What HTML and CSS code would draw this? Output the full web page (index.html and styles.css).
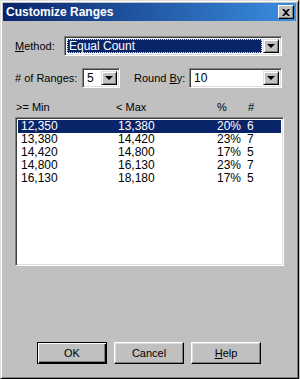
FILE: index.html
```
<!DOCTYPE html>
<html>
  <head>
    <title>Customize Ranges</title>
    <link rel="stylesheet" href="styles.css">
  </head>
  <body>
    <div class="window">
      <!-- Title bar -->
      <div class="titlebar">
        <span class="title">Customize Ranges</span>
        <span class="close-btn">
          <svg width="8" height="7" viewBox="0 0 8 7">
            <path d="M0 0h2l2 2 2-2h2L5 3.5 8 7H6L4 5 2 7H0l3-3.5z" fill="#000"/>
          </svg>
        </span>
      </div>

      <div class="content">
        <!-- Method -->
        <div class="row row-method">
          <label class="label label-method"><u>M</u>ethod:</label>
          <div class="combo combo-method">
            <div class="combo-value selected">Equal Count</div>
            <span class="combo-btn"><span class="arrow"></span></span>
          </div>
        </div>

        <!-- Ranges / Round by -->
        <div class="row row-ranges">
          <label class="label label-ranges"># of Ranges:</label>
          <div class="combo combo-small">
            <div class="combo-value">5</div>
            <span class="combo-btn"><span class="arrow"></span></span>
          </div>
          <label class="label label-round">Round <u>B</u>y:</label>
          <div class="combo combo-round">
            <div class="combo-value">10</div>
            <span class="combo-btn"><span class="arrow"></span></span>
          </div>
        </div>

        <!-- Column headers -->
        <div class="list-head">
          <span>&gt;= Min</span>
          <span>&lt; Max</span>
          <span>%</span>
          <span>#</span>
        </div>

        <!-- Range list -->
        <div class="list">
          <div class="list-row active"><span>12,350</span><span>13,380</span><span>20%</span><span>6</span></div>
          <div class="list-row"><span>13,380</span><span>14,420</span><span>23%</span><span>7</span></div>
          <div class="list-row"><span>14,420</span><span>14,800</span><span>17%</span><span>5</span></div>
          <div class="list-row"><span>14,800</span><span>16,130</span><span>23%</span><span>7</span></div>
          <div class="list-row"><span>16,130</span><span>18,180</span><span>17%</span><span>5</span></div>
        </div>

        <!-- Buttons -->
        <div class="buttons">
          <button class="btn default">OK</button>
          <button class="btn">Cancel</button>
          <button class="btn"><u>H</u>elp</button>
        </div>
      </div>
    </div>
  </body>
</html>
```

FILE: styles.css
```
/* Classic dialog look */
body {
  margin: 0;
  background-color: #c0c0c0;
  font-family: "Liberation Sans", Arial, sans-serif;
  font-size: 11px;
  color: #000;
}

.window {
  width: 299px;
  height: 379px;
  box-sizing: border-box;
  background-color: #c0c0c0;
  border: 1px solid;
  border-color: #dfdfdf #000 #000 #dfdfdf;
  box-shadow: inset 1px 1px #fff, inset -1px -1px #808080;
  padding: 2px;
  display: flex;
  flex-direction: column;
}

.titlebar {
  height: 18px;
  background: linear-gradient(to right, #0a246a, #3a8ee0);
  color: #fff;
  font-weight: bold;
  font-size: 12px;
  display: flex;
  align-items: center;
  justify-content: space-between;
  padding: 0 2px 0 3px;
}

.close-btn {
  width: 14px;
  height: 12px;
  background-color: #c0c0c0;
  border: 1px solid;
  border-color: #fff #000 #000 #fff;
  box-shadow: inset -1px -1px #808080;
  display: flex;
  align-items: center;
  justify-content: center;
}

.content {
  flex: 1;
  display: flex;
  flex-direction: column;
  padding: 0 14px 0 12px;
}

.row {
  display: flex;
  align-items: center;
}

.row-method {
  margin-top: 15px;
}

.row-ranges {
  margin-top: 12px;
}

.label-method {
  width: 49px;
}

.label-ranges {
  width: 67px;
}

.label-round {
  margin-left: 14px;
  width: 55px;
}

.combo {
  height: 20px;
  box-sizing: border-box;
  background-color: #fff;
  border: 1px solid;
  border-color: #808080 #fff #fff #808080;
  box-shadow: inset 1px 1px #404040, inset -1px -1px #dfdfdf;
  display: flex;
  align-items: stretch;
  padding: 2px;
}

.combo-method {
  flex: 1;
}

.combo-small {
  width: 38px;
}

.combo-round {
  flex: 1;
}

.combo-value {
  flex: 1;
  display: flex;
  align-items: center;
  padding-left: 2px;
  font-size: 12px;
}

.combo-value.selected {
  background-color: #0a246a;
  color: #fff;
  outline: 1px dotted #e8e8b0;
  outline-offset: -1px;
  margin-right: 1px;
}

.combo-btn {
  width: 16px;
  box-sizing: border-box;
  background-color: #c0c0c0;
  border: 1px solid;
  border-color: #dfdfdf #000 #000 #dfdfdf;
  box-shadow: inset 1px 1px #fff, inset -1px -1px #808080;
  display: flex;
  align-items: center;
  justify-content: center;
}

.arrow {
  width: 0;
  height: 0;
  border-left: 4px solid transparent;
  border-right: 4px solid transparent;
  border-top: 4px solid #000;
}

.list-head {
  display: grid;
  grid-template-columns: 100px 101px 31px 1fr;
  margin-top: 13px;
  padding-left: 1px;
  height: 13px;
  line-height: 13px;
}

.list {
  margin-top: 3px;
  height: 149px;
  box-sizing: border-box;
  background-color: #fff;
  border: 1px solid;
  border-color: #808080 #fff #fff #808080;
  box-shadow: inset 1px 1px #404040, inset -1px -1px #dfdfdf;
  padding: 2px 2px;
  margin-right: -2px;
}

.list-row {
  display: grid;
  grid-template-columns: 97px 99px 30px 1fr;
  height: 13px;
  line-height: 13px;
  padding-left: 3px;
  font-size: 12px;
}

.list-row.active {
  background-color: #0a246a;
  color: #fff;
}

.buttons {
  margin-top: auto;
  margin-bottom: 12px;
  display: flex;
  gap: 7px;
  padding-left: 22px;
}

.btn {
  width: 70px;
  height: 22px;
  font-family: "Liberation Sans", Arial, sans-serif;
  font-size: 11px;
  background-color: #c0c0c0;
  border: 1px solid;
  border-color: #fff #000 #000 #fff;
  box-shadow: inset -1px -1px #808080, inset 1px 1px #dfdfdf;
  padding: 0;
}

.btn.default {
  border: 1px solid #000;
  box-shadow: inset 1px 1px #fff, inset -1px -1px #000, inset -2px -2px #808080;
}
```
